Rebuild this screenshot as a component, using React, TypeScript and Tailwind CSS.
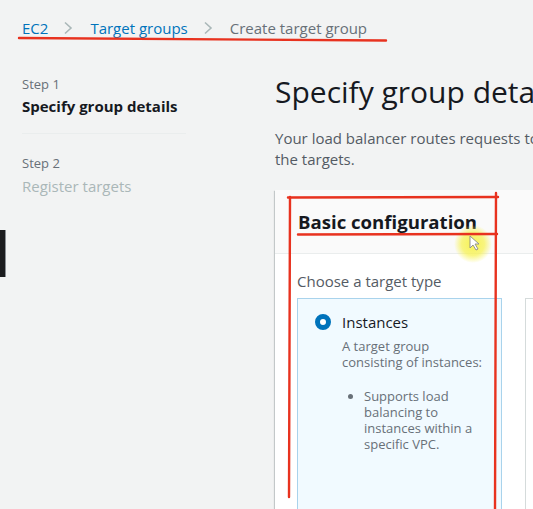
import React from "react";

function Chevron() {
  return (
    <svg width="10" height="14" viewBox="0 0 10 14" className="ml-[15px] mr-[17px]">
      <path d="M2 1.5 L8 7 L2 12.5" fill="none" stroke="#aab7b8" strokeWidth="1.6" />
    </svg>
  );
}

function Marks() {
  return (
    <svg className="absolute inset-0 pointer-events-none" width="533" height="509" viewBox="0 0 533 509">
      <defs>
        <radialGradient id="hl">
          <stop offset="0%" stopColor="#f7f24a" stopOpacity="0.95" />
          <stop offset="60%" stopColor="#f7f24a" stopOpacity="0.7" />
          <stop offset="100%" stopColor="#f7f24a" stopOpacity="0" />
        </radialGradient>
      </defs>
      <circle cx="473" cy="244" r="19" fill="url(#hl)" />
      <path d="M470 236 L470 248 L473 245 L476 250 L478 249 L475 244 L479 244 Z" fill="#fff" stroke="#8a8a8a" strokeWidth="0.9" />
      <g stroke="#e8321f" strokeWidth="2.4" strokeLinecap="round" fill="none">
        <path d="M19 38 L386 40.5" />
        <path d="M288 197.5 L498 197" />
        <path d="M496 193 L495 509" />
        <path d="M290 197 L289 497" />
        <path d="M298 234.5 L497 234" />
      </g>
    </svg>
  );
}

export default function App() {
  return (
    <div className="relative w-[533px] h-[509px] overflow-hidden bg-[#f2f3f3] font-['Open_Sans',sans-serif]">
      {/* Breadcrumb */}
      <div className="flex items-center pl-[22px] pt-[18px] h-[38px] text-[15px] leading-[20px]">
        <span className="text-[#0073bb]">EC2</span>
        <Chevron />
        <span className="text-[#0073bb]">Target groups</span>
        <Chevron />
        <span className="text-[#687078]">Create target group</span>
      </div>

      <div className="flex">
        {/* Steps */}
        <div className="w-[275px] shrink-0 pl-[22px] pt-[38px]">
          <div className="w-[164px]">
            <div className="text-[13px] leading-[16px] text-[#687078]">Step 1</div>
            <div className="mt-[4px] text-[15px] leading-[20px] font-bold text-[#16191f]">Specify group details</div>
            <div className="mt-[17px] border-t border-[#eaeded]" />
            <div className="mt-[21px] text-[13px] leading-[16px] text-[#687078]">Step 2</div>
            <div className="mt-[5px] text-[15px] leading-[20px] text-[#aab7b8]">Register targets</div>
          </div>
        </div>

        {/* Main */}
        <div className="w-[700px] shrink-0 pt-[36px]">
          <h1 className="text-[30px] leading-[36px] text-[#16191f] whitespace-nowrap">Specify group details</h1>
          <p className="mt-[18px] text-[15px] leading-[21px] text-[#545b64]">
            Your load balancer routes requests to the targets and performs health checks
            <br />
            the targets.
          </p>

          <div className="mt-[20px] bg-white shadow-[0_1px_1px_0_rgba(0,28,36,0.3),1px_1px_1px_0_rgba(0,28,36,0.15),-1px_1px_1px_0_rgba(0,28,36,0.15)]">
            <div className="h-[64px] flex items-center pl-[23px] bg-[#fafafa] border-b border-[#eaeded]">
              <h2 className="text-[18.6px] leading-[24px] font-bold text-[#16191f]">Basic configuration</h2>
            </div>
            <div className="pl-[22px] pt-[17px]">
              <div className="text-[15px] leading-[20px] text-[#545b64]">Choose a target type</div>
              <div className="mt-[7px] flex gap-[23px]">
                <div className="w-[205px] h-[240px] bg-[#f1faff] border border-[#a9d3ec] pl-[17px] pt-[13px]">
                  <div className="flex items-center gap-[11px]">
                    <span className="w-[16px] h-[16px] rounded-full border-[5px] border-[#0073bb] bg-white" />
                    <span className="text-[15px] leading-[20px] text-[#16191f]">Instances</span>
                  </div>
                  <div className="pl-[27px]">
                    <p className="mt-[6px] text-[13px] leading-[16px] text-[#687078]">
                      A target group
                      <br />
                      consisting of instances:
                    </p>
                    <ul className="mt-[18px] pl-[22px] list-disc text-[13px] leading-[16px] text-[#687078] w-[148px]">
                      <li>Supports load balancing to instances within a specific VPC.</li>
                    </ul>
                  </div>
                </div>
                <div className="w-[205px] h-[240px] bg-white border border-[#d5dbdb]" />
              </div>
            </div>
          </div>
        </div>
      </div>

      {/* dark block at left edge */}
      <div className="absolute left-0 top-[230px] w-[6px] h-[47px] bg-[#1b1c1e] border-r border-[#8a8f94]" />

      <Marks />
    </div>
  );
}
